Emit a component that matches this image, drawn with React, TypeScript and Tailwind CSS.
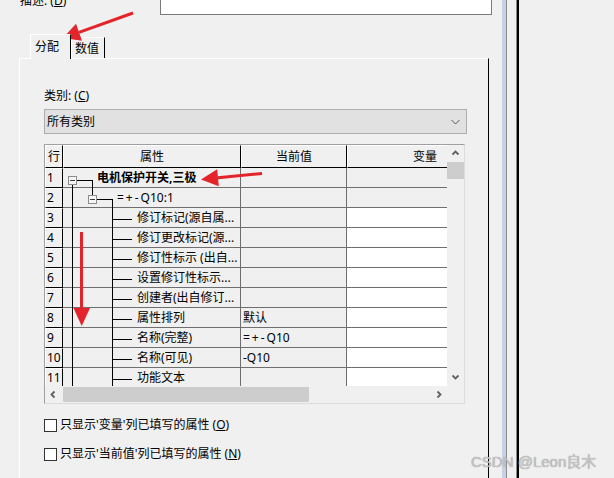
import React from "react";

type Row = { n: string; level: number; label: React.ReactNode; bold?: boolean; value: React.ReactNode; white: boolean };

const Sp = ({ children }: { children: React.ReactNode }) => <span className="tracking-[2px]">{children}</span>;

const rows: Row[] = [
  { n: "1", level: 0, label: "电机保护开关,三极", bold: true, value: "", white: false },
  { n: "2", level: 1, label: <><Sp>=+-</Sp>Q10:1</>, value: "", white: false },
  { n: "3", level: 2, label: "修订标记(源自属...", value: "", white: true },
  { n: "4", level: 2, label: "修订更改标记(源...", value: "", white: true },
  { n: "5", level: 2, label: "修订性标示 (出自...", value: "", white: true },
  { n: "6", level: 2, label: "设置修订性标示...", value: "", white: true },
  { n: "7", level: 2, label: "创建者(出自修订...", value: "", white: true },
  { n: "8", level: 2, label: "属性排列", value: "默认", white: true },
  { n: "9", level: 2, label: "名称(完整)", value: <><Sp>=+-</Sp>Q10</>, white: true },
  { n: "10", level: 2, label: "名称(可见)", value: "-Q10", white: true },
  { n: "11", level: 2, label: "功能文本", value: "", white: true },
];

const padByLevel = ["pl-[34px]", "pl-[54px]", "pl-[74px]"];

function Chevron({ dir }: { dir: "up" | "down" | "left" | "right" }) {
  const d =
    dir === "up"
      ? "M1.5 5.5 L4.5 2.5 L7.5 5.5"
      : dir === "down"
      ? "M1.5 2.5 L4.5 5.5 L7.5 2.5"
      : dir === "left"
      ? "M5.5 1.5 L2.5 4.5 L5.5 7.5"
      : "M3.5 1.5 L6.5 4.5 L3.5 7.5";
  return (
    <svg width="9" height="9" viewBox="0 0 9 9">
      <path d={d} fill="none" stroke="#606060" strokeWidth="1.8" />
    </svg>
  );
}

function TreeLines() {
  const lines: React.ReactNode[] = [];
  for (let r = 2; r < rows.length; r++) {
    const y = r * 20 + 11.5;
    lines.push(<line key={r} x1="50" y1={y} x2="69" y2={y} />);
  }
  return (
    <svg
      className="absolute left-[18px] top-[23px] pointer-events-none"
      width="178"
      height="218"
      viewBox="0 0 178 218"
      shapeRendering="crispEdges"
    >
      <g stroke="#000" strokeWidth="1">
        <line x1="9.5" y1="16" x2="9.5" y2="218" />
        <line x1="14" y1="12.5" x2="30" y2="12.5" />
        <line x1="29.5" y1="12" x2="29.5" y2="27" />
        <line x1="34" y1="31.5" x2="50" y2="31.5" />
        <line x1="49.5" y1="31" x2="49.5" y2="218" />
        {lines}
      </g>
      <rect x="5.5" y="8.5" width="8" height="8" fill="#f7f7f7" stroke="#8c8c8c" />
      <line x1="7" y1="12.5" x2="12" y2="12.5" stroke="#3c3c3c" />
      <rect x="25.5" y="27.5" width="8" height="8" fill="#f7f7f7" stroke="#8c8c8c" />
      <line x1="27" y1="31.5" x2="32" y2="31.5" stroke="#3c3c3c" />
    </svg>
  );
}

export default function App() {
  return (
    <div className="relative w-[614px] h-[478px] overflow-hidden bg-[#f0f0f0] text-black text-[12px] font-['Noto_Sans','Noto_Sans_CJK_SC',sans-serif] flex">
      {/* left area */}
      <div className="w-[502px] shrink-0 flex flex-col">
        {/* description row */}
        <div className="mt-[-20px] h-[35px] flex shrink-0">
          <div className="ml-[20px] mt-[13px] leading-[16px] whitespace-nowrap">
            描述: (<span className="underline">D</span>)
          </div>
          <div className="ml-auto mr-[10px] w-[332px] h-[35px] bg-white border border-[#7a7a7a]" />
        </div>

        {/* tabs */}
        <div className="h-[43px] shrink-0 flex items-end pl-[30px]">
          <div className="relative z-10 w-[41px] h-[25px] mb-[-1px] bg-[#f0f0f0] border-l border-t border-r border-l-white border-t-white border-r-black pl-[4px] pt-[4px] leading-[16px]">
            分配
          </div>
          <div className="w-[34px] h-[21px] bg-[#f0f0f0] border-l border-t border-r border-l-white border-t-white border-r-black pl-[3px] pt-[3px] leading-[16px]">
            数值
          </div>
        </div>

        {/* panel */}
        <div className="ml-[19px] w-[470px] flex-1 border-l border-t border-r border-l-white border-t-white border-r-black pl-[24px] flex flex-col">
          <div className="mt-[29px] leading-[16px]">
            类别: (<span className="underline">C</span>)
          </div>
          <div className="mt-[5px] w-[423px] h-[25px] border border-[#adadad] bg-[#e1e1e1] flex items-center pl-[2px]">
            <span className="leading-[16px]">所有类别</span>
            <svg className="ml-auto mr-[6px]" width="9" height="6" viewBox="0 0 9 6">
              <path d="M0.5 1 L4.5 5 L8.5 1" fill="none" stroke="#555" strokeWidth="1" />
            </svg>
          </div>

          {/* grid */}
          <div className="mt-[10px] w-[421px] h-[260px] border border-t-[#a0a0a0] border-l-[#a0a0a0] border-b-[#dcdcdc] border-r-[#dcdcdc] flex flex-col">
            <div className="flex h-[241px]">
              <div className="relative w-[402px] h-[241px] overflow-hidden">
                {/* header */}
                <div className="flex h-[23px]">
                  <div className="w-[18px] shrink-0 border border-t-white border-l-white border-r-black border-b-black flex items-center justify-center leading-[16px]">
                    行
                  </div>
                  <div className="w-[178px] shrink-0 border border-t-white border-l-white border-r-black border-b-black flex items-center justify-center leading-[16px]">
                    属性
                  </div>
                  <div className="w-[106px] shrink-0 border border-t-white border-l-white border-r-black border-b-black flex items-center justify-center leading-[16px]">
                    当前值
                  </div>
                  <div className="w-[100px] shrink-0 border-t border-l border-b border-t-white border-l-white border-b-black flex items-center justify-end pr-[10px] leading-[16px]">
                    变量
                  </div>
                </div>
                {/* body */}
                <div className="h-[218px] overflow-hidden">
                  {rows.map((r) => (
                    <div key={r.n} className="flex h-[20px]">
                      <div className="w-[18px] shrink-0 border border-t-white border-l-white border-r-black border-b-black pl-[1px] leading-[18px] whitespace-nowrap overflow-hidden">
                        {r.n}
                      </div>
                      <div
                        className={`w-[178px] shrink-0 border-r border-b border-[#6e6e6e] leading-[19px] whitespace-nowrap overflow-hidden ${padByLevel[r.level]} ${r.bold ? "font-bold" : ""}`}
                      >
                        {r.label}
                      </div>
                      <div className="w-[106px] shrink-0 border-r border-b border-[#6e6e6e] pl-[2px] leading-[19px] whitespace-nowrap">
                        {r.value}
                      </div>
                      <div className={`w-[100px] shrink-0 border-b border-[#6e6e6e] ${r.white ? "bg-white" : "bg-[#f0f0f0]"}`} />
                    </div>
                  ))}
                </div>
                <TreeLines />
              </div>
              {/* vertical scrollbar */}
              <div className="w-[17px] h-[241px] bg-[#f0f0f0] flex flex-col">
                <div className="h-[17px] flex items-center justify-center">
                  <Chevron dir="up" />
                </div>
                <div className="h-[17px] bg-[#cdcdcd]" />
                <div className="flex-1" />
                <div className="h-[17px] flex items-center justify-center">
                  <Chevron dir="down" />
                </div>
              </div>
            </div>
            <div className="flex h-[17px]">
              <div className="w-[402px] h-[17px] bg-[#f0f0f0] flex items-center">
                <div className="w-[17px] h-[17px] flex items-center justify-center">
                  <Chevron dir="left" />
                </div>
                <div className="ml-[1px] w-[246px] h-[15px] bg-[#cdcdcd]" />
                <div className="ml-auto w-[17px] h-[17px] flex items-center justify-center">
                  <Chevron dir="right" />
                </div>
              </div>
              <div className="w-[17px] h-[17px] bg-[#f0f0f0]" />
            </div>
          </div>

          {/* checkboxes */}
          <div className="mt-[11px] h-[20px] flex items-center">
            <div className="w-[13px] h-[13px] border border-[#333] bg-white shrink-0" />
            <span className="ml-[3px] leading-[16px] whitespace-nowrap">
              只显示'变量'列已填写的属性 (<span className="underline">O</span>)
            </span>
          </div>
          <div className="mt-[9px] h-[20px] flex items-center">
            <div className="w-[13px] h-[13px] border border-[#333] bg-white shrink-0" />
            <span className="ml-[3px] leading-[16px] whitespace-nowrap">
              只显示'当前值'列已填写的属性 (<span className="underline">N</span>)
            </span>
          </div>
        </div>
      </div>

      {/* right splitter stripes */}
      <div className="w-[4px] shrink-0 bg-[#c8d0e6]" />
      <div className="w-[1px] shrink-0 bg-[#8c8c8c]" />
      <div className="w-[9px] shrink-0" />
      <div className="w-[1px] shrink-0 bg-[#8a8a8a]" />
      <div className="w-[2px] shrink-0 bg-black" />
      <div className="flex-1" />

      {/* red annotation arrows */}
      <svg className="absolute left-0 top-0 pointer-events-none" width="614" height="478" viewBox="0 0 614 478">
        <g stroke="#e3242b" strokeWidth="3" fill="none">
          <line x1="133" y1="13" x2="79" y2="32.3" />
          <line x1="262" y1="173.5" x2="218" y2="177.8" />
          <line x1="81.5" y1="232" x2="81.5" y2="309" />
        </g>
        <g fill="#e3242b">
          <polygon points="63,38 82,40.8 76,23.8" />
          <polygon points="201,179.5 218.8,186.3 217.2,169.3" />
          <polygon points="81.7,326 73.5,308 90,308" />
        </g>
      </svg>

      {/* watermark */}
      <div className="absolute left-[471px] top-[452px] text-[15px] leading-[20px] text-[#c4c4c4] whitespace-nowrap font-['Liberation_Sans','Noto_Sans_CJK_SC',sans-serif] [text-shadow:0_0_1px_#8f8f8f]">
        CSDN @Leon良木
      </div>
    </div>
  );
}
